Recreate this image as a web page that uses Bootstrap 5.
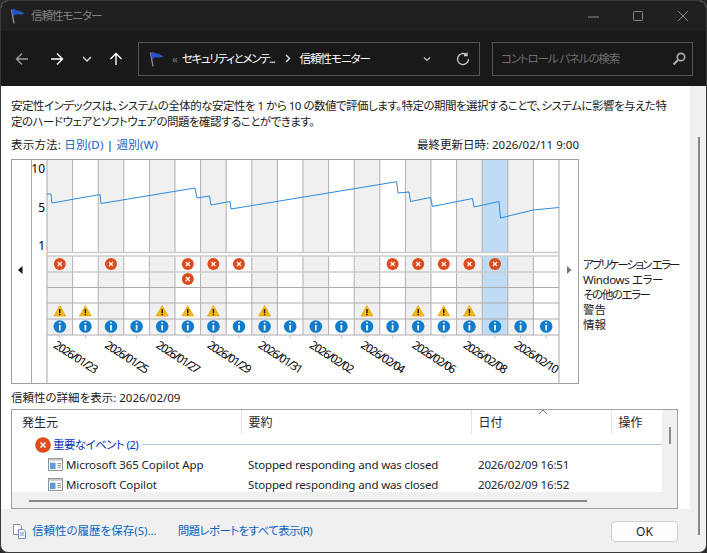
<!DOCTYPE html>
<html lang="ja">
<head>
<meta charset="UTF-8">
<meta name="viewport" content="width=device-width, initial-scale=1.0">
<title>信頼性モニター</title>
<link href="https://cdn.jsdelivr.net/npm/bootstrap@5.3.0/dist/css/bootstrap.min.css" rel="stylesheet">
<style>
html, body { height: 100%; margin: 0; background: #2a2a2a; overflow: hidden; }
body, table, svg text {
    font-family: "Noto Sans", "Noto Sans CJK JP", sans-serif;
    font-size: 11.5px;
    font-feature-settings: "palt";
    color: #1a1a1a;
}
.win { width: 707px; height: 553px; border-radius: 8px; overflow: hidden; background: #f0f0f0; border: 1px solid #3a3a3a; box-sizing: border-box; }
.titlebar { height: 30px; background: #202020; color: #808080; padding-left: 8px; gap: 6px; letter-spacing: -1px; }
.winbtns { margin-left: auto; gap: 30px; padding-right: 15px; }
.toolbar { height: 55px; background: #191919; padding-left: 11px; padding-right: 13px; color: #fff; }
.navico { width: 20px; display: flex; justify-content: center; }
.nav-fwd { margin-left: 15px; }
.nav-drop { margin-left: 10px; }
.nav-up { margin-left: 9px; }
.addr { width: 342px; height: 34px; margin-left: 12px; border: 1px solid #555; padding: 0 9px; }
.crumb { letter-spacing: -1.3px; }
.crumb-sep { margin: 0 9px 0 10px; }
.crumb-end { letter-spacing: -1px; }
.searchbox { width: 201px; height: 34px; margin-left: 12px; border: 1px solid #555; color: #6e6e6e; padding: 0 6px 0 8px; letter-spacing: -1.15px; }
.main-pane { background: #fff; width: 689px; }
.sidebar { width: 16px; }
.sidebar-thumb { width: 2px; height: 398px; margin: 51px 0 0 8px; background: #8a8a8a; }
.intro { padding: 12px 10px 0; line-height: 16px; letter-spacing: -.5px; white-space: nowrap; }
.viewline { height: 16px; line-height: 16px; margin: 7px 10px 6px; width: 568px; }
.view-switch { letter-spacing: .2px; }
.blue-link { color: #0a66c2; text-decoration: none; }
.chart-wrap { height: 225px; padding-left: 10px; }
.chart-labels { padding: 98px 0 0 3px; line-height: 15px; white-space: nowrap; }
.lbl-kana-long { letter-spacing: -1.8px; }
.lbl-kana { letter-spacing: -1.4px; }
.lbl-latin { letter-spacing: -.4px; }
.detail-label { height: 16px; line-height: 16px; margin: 6px 10px 3px; }
.detail-box { height: 100px; width: 667px; margin-left: 10px; border: 1px solid #a0a0a0; background: #f0f0f0; }
.list-area { width: 650px; }
.list-clip { height: 82px; overflow: hidden; background: #fff; }
.list-table { table-layout: fixed; width: 650px; margin: 0; }
.list-table th, .list-table td { padding: 0; font-weight: 400; background: transparent; white-space: nowrap; border: 0; }
.list-table thead th { height: 24px; padding: 0 0 2px 7px; position: relative; font-size: 12px; border-right: 1px solid #e3e3e3; }
.list-table thead th:first-child { padding-left: 10px; }
.list-table tbody tr { height: 20px; }
.group-row { color: #0033bc; padding: 2px 0 3px 23px !important; }
.group-gap { gap: 2px; }
.group-title { letter-spacing: -.6px; margin-right: 2px; }
.group-rule { flex: 1; height: 1px; background: #b4c3de; }
.sort-mark { position: absolute; left: 66px; top: -1px; }
.list-table .src-cell { padding-left: 36px; letter-spacing: -.08px; }
.src-gap { gap: 3px; }
.list-table .txt-cell { padding-left: 7px; letter-spacing: -.15px; }
.hscroll { height: 17px; padding-left: 17px; }
.hscroll-thumb { width: 558px; height: 2px; background: #8a8a8a; }
.vscroll-thumb { width: 2px; height: 17px; margin: 17px 0 0 7px; background: #8a8a8a; }
.footer-bar { height: 44px; padding: 0 12px 0 11px; gap: 5px; }
.report-link { letter-spacing: -.6px; margin-left: 16px; }
.ok-btn { width: 67px; height: 21px; padding: 0; margin-left: auto; margin-top: 1px; font-size: 12px; line-height: 18px; border: 1px solid #cfcfcf; border-radius: 4px; background: #fdfdfd; color: #1a1a1a; }
.date-lbl { font-size: 11.5px; letter-spacing: -1.25px; }
.axis-lbl { font-size: 12px; }
</style>
</head>
<body>
<svg width="0" height="0" class="d-block">
    <defs>
        <symbol id="flag" viewBox="0 0 16 16">
            <path d="M2.500 1.500 L5 15.500" stroke="#8d8d8d" stroke-width="1.4" fill="none"/>
            <path d="M3 1.200 C6 .2 7 3 10 2.600 L15.800 5.400 C12.500 6.800 11 6.600 8.600 6.200 C6.500 6 5.400 7.400 4 8.200 Z" fill="#2b52c8"/>
        </symbol>
        <symbol id="appicon" viewBox="0 0 16 14">
            <rect x=".5" y=".5" width="15" height="13" fill="#fff" stroke="#8c8c8c"/>
            <rect x="1" y="1" width="14" height="2" fill="#c9c9c9"/>
            <rect x="2" y="5" width="6" height="7" fill="#5b9be0"/>
            <path d="M10 6h4M10 8h4M10 10h4" stroke="#8c8c8c"/>
        </symbol>
    </defs>
</svg>
<div class="win d-flex flex-column">
    <div class="titlebar d-flex align-items-center flex-shrink-0">
        <svg width="16" height="16"><use href="#flag"/></svg>
        <span>信頼性モニター</span>
        <div class="winbtns d-flex align-items-center">
            <svg width="15" height="15"><path d="M2 8h11" stroke="#8a8a8a"/></svg>
            <svg width="15" height="15"><rect x="2.500" y="2.500" width="9" height="9" rx="1" fill="none" stroke="#8a8a8a"/></svg>
            <svg width="15" height="15"><path d="M2 2l10 10M12 2L2 12" stroke="#8a8a8a"/></svg>
        </div>
    </div>
    <div class="toolbar d-flex align-items-center flex-shrink-0">
        <span class="navico"><svg width="14" height="14" fill="none" stroke="#9a9a9a" stroke-width="1.4"><path d="M13 7H1.500M7 1.500L1.500 7 7 12.500"/></svg></span>
        <span class="navico nav-fwd"><svg width="14" height="14" fill="none" stroke="#fff" stroke-width="1.4"><path d="M1 7h11.500M7 1.500L12.500 7 7 12.500"/></svg></span>
        <span class="navico nav-drop"><svg width="10" height="10" fill="none" stroke="#ddd" stroke-width="1.3"><path d="M1 3l4 4 4-4"/></svg></span>
        <span class="navico nav-up"><svg width="14" height="14" fill="none" stroke="#fff" stroke-width="1.4"><path d="M7 13V1.500M1.500 7L7 1.500 12.500 7"/></svg></span>
        <div class="addr d-flex align-items-center">
            <svg width="16" height="16"><use href="#flag"/></svg>
            <span class="ms-2" style="color:#777">«</span>
            <span class="ms-1 crumb">セキュリティとメンテ...</span>
            <svg class="crumb-sep" width="6" height="9" fill="none" stroke="#eee" stroke-width="1.3"><path d="M1 1l3.500 3.500L1 8"/></svg>
            <span class="crumb-end">信頼性モニター</span>
            <svg class="ms-auto" width="10" height="10" fill="none" stroke="#ccc" stroke-width="1.1"><path d="M2 3.500l3 3 3-3"/></svg>
            <svg class="ms-4" width="14" height="14" fill="none" stroke="#ccc" stroke-width="1.3"><path d="M12.500 7A5.500 5.500 0 1 1 10.500 2.800M11 .5v3H8"/></svg>
        </div>
        <div class="searchbox d-flex align-items-center">
            <span>コントロール パネルの検索</span>
            <svg class="ms-auto" width="14" height="14" fill="none" stroke="#aaa"><circle cx="9" cy="5" r="3.700" stroke-width="1.7"/><path d="M6 8l-4.500 4.500" stroke-width="2.2"/></svg>
        </div>
    </div>
    <div class="d-flex flex-grow-1">
        <div class="d-flex flex-column">
            <div class="main-pane">
                <div class="intro">安定性インデックスは、システムの全体的な安定性を 1 から 10 の数値で評価します。特定の期間を選択することで、システムに影響を与えた特<br>定のハードウェアとソフトウェアの問題を確認することができます。</div>
                <div class="viewline d-flex justify-content-between">
                    <span class="view-switch">表示方法: <a class="blue-link" href="#">日別(D)</a> | <a class="blue-link" href="#">週別(W)</a></span>
                    <span>最終更新日時: 2026/02/11 9:00</span>
                </div>
                <div class="chart-wrap d-flex">
                    <svg id="chart" class="flex-shrink-0" width="569" height="225" viewBox="11 159 569 225"></svg>
                    <div class="chart-labels">
                        <div class="lbl-kana-long">アプリケーション エラー</div>
                        <div class="lbl-latin">Windows エラー</div>
                        <div class="lbl-kana">その他のエラー</div>
                        <div>警告</div>
                        <div>情報</div>
                    </div>
                </div>
                <div class="detail-label">信頼性の詳細を表示: 2026/02/09</div>
                <div class="detail-box d-flex">
                    <div class="list-area">
                        <div class="list-clip">
                            <table class="table list-table">
                                <colgroup><col style="width:229px"><col style="width:230px"><col style="width:140px"><col style="width:51px"></colgroup>
                                <thead>
                                    <tr>
                                        <th>発生元</th>
                                        <th>要約</th>
                                        <th>日付<svg class="sort-mark" width="10" height="6" fill="none" stroke="#777"><path d="M1 5l4-4 4 4"/></svg></th>
                                        <th class="border-0">操作</th>
                                    </tr>
                                </thead>
                                <tbody>
                                    <tr>
                                        <td colspan="4" class="group-row">
                                            <div class="d-flex align-items-center group-gap">
                                                <svg width="16" height="16"><circle cx="8" cy="8" r="7.800" fill="#dc4c1e"/><path d="M5.500 5.500l5 5M10.500 5.500l-5 5" stroke="#fff" stroke-width="1.5"/></svg>
                                                <span class="group-title">重要なイベント (2)</span>
                                                <span class="group-rule"></span>
                                            </div>
                                        </td>
                                    </tr>
                                    <tr>
                                        <td class="src-cell"><div class="d-flex align-items-center src-gap"><svg width="15" height="13"><use href="#appicon"/></svg>Microsoft 365 Copilot App</div></td>
                                        <td class="txt-cell">Stopped responding and was closed</td>
                                        <td class="txt-cell">2026/02/09 16:51</td>
                                        <td></td>
                                    </tr>
                                    <tr>
                                        <td class="src-cell"><div class="d-flex align-items-center src-gap"><svg width="15" height="13"><use href="#appicon"/></svg>Microsoft Copilot</div></td>
                                        <td class="txt-cell">Stopped responding and was closed</td>
                                        <td class="txt-cell">2026/02/09 16:52</td>
                                        <td></td>
                                    </tr>
                                </tbody>
                            </table>
                        </div>
                        <div class="hscroll d-flex align-items-center"><div class="hscroll-thumb"></div></div>
                    </div>
                    <div><div class="vscroll-thumb"></div></div>
                </div>
            </div>
            <div class="footer-bar d-flex align-items-center">
                <svg width="15" height="17" fill="#fff" stroke="#8c8c8c"><path d="M1.500 1.500h6l2 2v8h-8z"/><path d="M6.500 6.500h5l2 2v7h-7z" stroke="#6a8fc0"/><path d="M8 10h4M8 12h4" stroke="#6a8fc0"/></svg>
                <a class="blue-link" href="#">信頼性の履歴を保存(S)...</a>
                <a class="blue-link report-link" href="#">問題レポートをすべて表示(R)</a>
                <button type="button" class="btn ok-btn">OK</button>
            </div>
        </div>
        <div class="sidebar"><div class="sidebar-thumb"></div></div>
    </div>
</div>
<script>
    // chart columns: 20 days from 2026/01/23, x in window pixels
    const colW = 25.6, left = 47;
    const errorsTop = [0, 2, 5, 6, 7, 13, 14, 15, 16, 17];
    const warnings = [0, 1, 4, 5, 6, 8, 12, 14, 15, 16];
    const line = "47,194 51,194 52,203 100,194.5 101,203.5 195,188 197,198 209.5,196 211,205 230,201.5 231,209 396.7,181.7 398,193 409,192 410.5,201.5 430.5,197.5 432.5,206.5 472.5,198.5 474,207 499,201.5 500.5,218 533,210 559,207.5";

    function errorIcon(cx, cy) {
        return `<circle cx="${cx}" cy="${cy}" r="6" fill="#dc4c1e"/><path d="M${cx-2} ${cy-2}l4 4M${cx+2} ${cy-2}l-4 4" stroke="#fff" stroke-width="1.2"/>`;
    }
    function warnIcon(cx, cy) {
        return `<path d="M${cx} ${cy-5.5}L${cx+6} ${cy+5}H${cx-6}Z" fill="#f6b90d" stroke="#e0a000" stroke-width=".6" stroke-linejoin="round"/><path d="M${cx} ${cy-2}v4M${cx} ${cy+2.8}v1.4" stroke="#222" stroke-width="1.5"/>`;
    }
    function infoIcon(cx, cy) {
        return `<circle cx="${cx}" cy="${cy}" r="6.3" fill="#0f7ccc"/><path d="M${cx} ${cy-1.5}v5.5M${cx} ${cy-4.5}v1.6" stroke="#fff" stroke-width="1.7"/>`;
    }

    let svg = '<rect x="11.5" y="159.5" width="567" height="224" fill="#fff" stroke="#a0a0a0"/>';
    for (let i = 0; i < 20; i++) {
        const x = left + i * colW;
        const fill = i === 17 ? '#c0dcf5' : (i % 2 === 0 ? '#f0f0f0' : '');
        if (fill) {
            svg += `<rect x="${x}" y="160" width="${colW}" height="92" fill="${fill}"/>`;
            svg += `<rect x="${x}" y="256" width="${colW}" height="79" fill="${fill}"/>`;
        }
    }
    for (let i = 1; i < 20; i++) {
        const x = left + i * colW;
        svg += `<path d="M${x} 160V252M${x} 256V335" stroke="#b0b0b0"/>`;
    }
    svg += '<path d="M31.5 160V383M47 160V383M559 160V383" stroke="#a8a8a8"/>';
    svg += '<path d="M47 252.5H559M47 256H559M47 272H559" stroke="#cccccc" stroke-width="1.5"/>';
    svg += '<path d="M47 287.5H559M47 303H559M47 319H559M47 335H559" stroke="#acacac"/>';
    svg += `<polyline points="${line}" fill="none" stroke="#2a8bdc" stroke-width="1"/>`;
    svg += '<text class="axis-lbl" x="45" y="173" text-anchor="end">10</text><text class="axis-lbl" x="45" y="212" text-anchor="end">5</text><text class="axis-lbl" x="45" y="250" text-anchor="end">1</text>';
    svg += '<path d="M18 270l4.500-4v8z" fill="#111"/><path d="M567 266l4.500 4-4.500 4z" fill="#777"/>';

    for (let i = 0; i < 20; i++) {
        const cx = left + i * colW + 12.8;
        if (errorsTop.includes(i)) svg += errorIcon(cx, 264);
        if (i === 5) svg += errorIcon(cx, 279);
        if (warnings.includes(i)) svg += warnIcon(cx, 311);
        svg += infoIcon(cx, 326.5);
        svg += `<path d="M${cx} 335v3.500" stroke="#c8c8c8"/>`;
        if (i % 2 === 0) {
            const day = new Date(Date.UTC(2026, 0, 23 + i));
            const label = '2026/' + String(day.getUTCMonth() + 1).padStart(2, '0') + '/' + String(day.getUTCDate()).padStart(2, '0');
            svg += `<text class="date-lbl" transform="translate(${cx - 7} 347) rotate(33)">${label}</text>`;
        }
    }
    document.getElementById('chart').innerHTML = svg;
</script>
<script src="https://cdn.jsdelivr.net/npm/bootstrap@5.3.0/dist/js/bootstrap.bundle.min.js"></script>
</body>
</html>
